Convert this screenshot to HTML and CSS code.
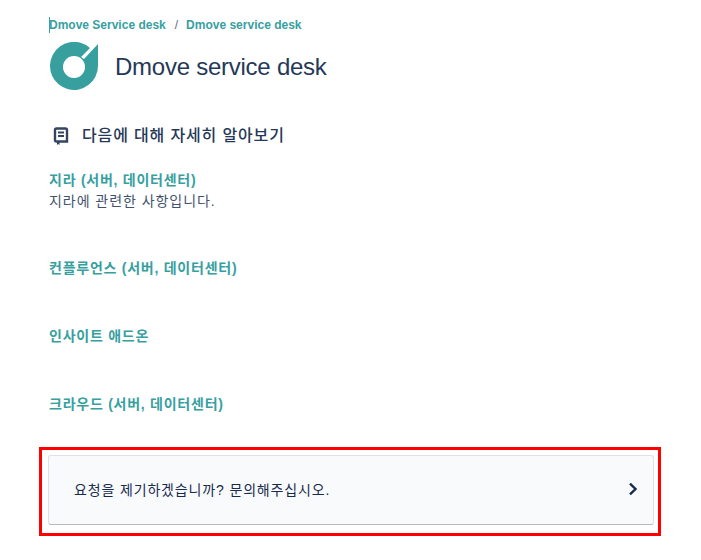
FILE: index.html
```html
<!DOCTYPE html>
<html lang="ko">
<head>
  <meta charset="UTF-8" />
  <title>Dmove service desk</title>
  <link rel="stylesheet" href="styles.css">
</head>
<body>
  <div class="page">
    <div class="breadcrumbs">
      <a class="crumb">Dmove Service desk</a>
      <span class="crumb-sep">/</span>
      <a class="crumb">Dmove service desk</a>
    </div>

    <div class="portal-header">
      <svg class="logo" width="48" height="48" viewBox="0 0 48 48">
        <path fill="#37a09f" d="M48 2V24A24 24 0 1 1 40 6L31 15L34 17Z" />
        <circle cx="24" cy="25" r="11" fill="#fff" />
      </svg>
      <h1>Dmove service desk</h1>
    </div>

    <div class="section-title">
      <svg class="book-icon" width="16" height="18" viewBox="0 0 16 18">
        <path fill="none" stroke="#344563" stroke-width="2.400" d="M3.500 1.500H12.500A1.500 1.500 0 0 1 14 3V14.500H3.500A1.500 1.500 0 0 1 2 13V3A1.500 1.500 0 0 1 3.500 1.500Z" />
        <path fill="#344563" d="M5 4.500H11V6.500H5ZM5 8H11V10H5ZM4 15H6.500V18L5.200 17L4 18Z" />
      </svg>
      <h2>다음에 대해 자세히 알아보기</h2>
    </div>

    <ul class="topics">
      <li class="topic">
        <a class="topic-link">지라 (서버, 데이터센터)</a>
        <p>지라에 관련한 사항입니다.</p>
      </li>
      <li class="topic">
        <a class="topic-link">컨플루언스 (서버, 데이터센터)</a>
      </li>
      <li class="topic">
        <a class="topic-link">인사이트 애드온</a>
      </li>
      <li class="topic">
        <a class="topic-link">크라우드 (서버, 데이터센터)</a>
      </li>
    </ul>

    <div class="highlight">
      <div class="request-card">
        <span class="request-text">요청을 제기하겠습니까? 문의해주십시오.</span>
        <svg width="10" height="14" viewBox="0 0 10 14">
          <path d="M2 1.700L7.500 7L2 12.300" fill="none" stroke="#172b4d" stroke-width="2.400" />
        </svg>
      </div>
    </div>
  </div>
</body>
</html>
```

FILE: styles.css
```css
body {
  margin: 0;
  font-family: "Liberation Sans", "Noto Sans CJK KR", sans-serif;
  background-color: #fff;
  color: #172b4d;
}

.page {
  width: 622px;
  margin-left: 39px;
  padding-top: 17px;
}

.breadcrumbs {
  display: flex;
  align-items: center;
  gap: 8px;
  height: 16px;
  margin-left: 10px;
  font-size: 12px;
  border-left: 1px solid #37a09f;
}

.crumb {
  color: #37a09f;
  font-weight: bold;
}

.crumb:first-child {
  margin-left: -1px;
}

.crumb-sep {
  margin-left: 1px;
  color: #5e6c84;
}

.portal-header {
  display: flex;
  align-items: center;
  gap: 17px;
  margin: 9px 0 0 11px;
}

h1 {
  margin: 0;
  padding-top: 2px;
  font-size: 24px;
  font-weight: normal;
  letter-spacing: -0.25px;
  color: #253858;
}

.section-title {
  display: flex;
  align-items: center;
  gap: 13px;
  margin: 34px 0 0 14px;
}

h2 {
  margin: 0;
  font-size: 16px;
  font-weight: 500;
  line-height: 24px;
  letter-spacing: 0.85px;
  color: #253858;
}

.topics {
  list-style: none;
  margin: 22px 0 0 10px;
  padding: 0;
}

.topic {
  padding-bottom: 48px;
  font-size: 14px;
  line-height: 20px;
}

.topic p {
  margin: 1px 0 -1px;
  font-size: 14px;
  letter-spacing: 0.95px;
  color: #42526e;
}

.topic-link {
  color: #37a09f;
  font-weight: bold;
  letter-spacing: 0.75px;
}

.highlight {
  margin-top: -15px;
  border: 3px solid #f00;
  padding: 5px 4px 8px 6px;
}

.request-card {
  display: flex;
  align-items: center;
  justify-content: space-between;
  height: 66px;
  padding: 0 15px 2px 25px;
  background-color: #f9fafc;
  border: 1px solid #dfe1e6;
  border-bottom: 1px solid #b3bac5;
  border-radius: 3px;
  font-size: 14px;
}

.request-text {
  margin-top: -1px;
  letter-spacing: 0.85px;
}
```
